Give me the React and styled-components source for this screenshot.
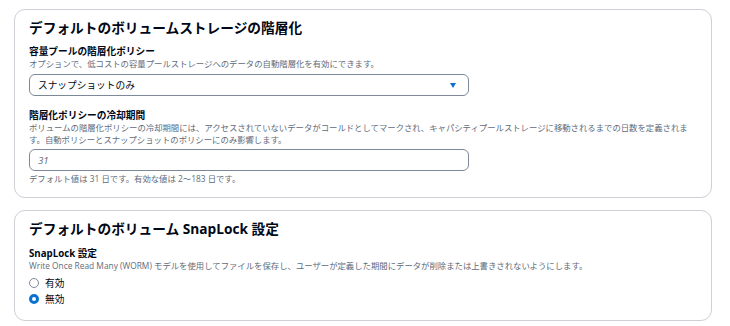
import React from 'react';
import styled, { createGlobalStyle } from 'styled-components';

const GlobalStyle = createGlobalStyle`
  html, body {
    margin: 0;
    padding: 0;
    background: #ffffff;
  }
  body {
    font-family: "Open Sans", "Noto Sans CJK JP", sans-serif;
    color: #000716;
  }
`;

const Page = styled.div`
  display: flex;
  flex-direction: column;
  gap: 12px;
  padding: 9px 18px 4px 14px;
`;

const Panel = styled.section`
  border: 1px solid #cfd0d6;
  border-radius: 11px;
  padding: 9px 14px ${(p) => p.$bottom || 12}px;
  display: flex;
  flex-direction: column;
`;

const Title = styled.h2`
  margin: 0 0 ${(p) => p.$after || 9}px;
  font-size: 13.7px;
  line-height: 18px;
  font-weight: 700;
  color: #000716;
`;

const Field = styled.div`
  display: flex;
  flex-direction: column;
  margin-top: ${(p) => p.$top || 0}px;
`;

const Label = styled.div`
  font-size: 9.7px;
  line-height: 12px;
  font-weight: 700;
  color: #000716;
`;

const Description = styled.div`
  font-size: 8.37px;
  line-height: 12px;
  color: #5f6b7a;
`;

const Constraint = styled(Description)`
  margin-top: 2px;
`;

const Box = styled.div`
  box-sizing: border-box;
  width: 440px;
  height: 22px;
  margin-top: ${(p) => p.$top || 4}px;
  border: 1.5px solid #7d8998;
  border-radius: 6px;
  padding: 0 12px 0 8px;
  display: flex;
  align-items: center;
  justify-content: space-between;
  font-size: 9.7px;
  color: ${(p) => (p.$placeholder ? '#5f6b7a' : '#000716')};
  font-style: ${(p) => (p.$placeholder ? 'italic' : 'normal')};
`;

const Caret = styled.span`
  width: 0;
  height: 0;
  border-left: 3px solid transparent;
  border-right: 3px solid transparent;
  border-top: 5px solid #0972d3;
`;

const RadioGroup = styled.div`
  display: flex;
  flex-direction: column;
  margin-top: 3px;
`;

const RadioRow = styled.label`
  display: flex;
  align-items: center;
  gap: 6px;
  height: 16px;
  font-size: 9.7px;
  color: #000716;
`;

const RadioDot = styled.span`
  box-sizing: border-box;
  width: 10px;
  height: 10px;
  border-radius: 50%;
  border: ${(p) => (p.$checked ? '3px solid #0972d3' : '1.4px solid #7d8998')};
  background: #ffffff;
`;

const radios = [
  { label: '有効', checked: false },
  { label: '無効', checked: true },
];

export default function App() {
  return (
    <>
      <GlobalStyle />
      <Page>
        <Panel $bottom={12}>
          <Title>デフォルトのボリュームストレージの階層化</Title>
          <Field>
            <Label>容量プールの階層化ポリシー</Label>
            <Description>
              オプションで、低コストの容量プールストレージへのデータの自動階層化を有効にできます。
            </Description>
            <Box>
              <span>スナップショットのみ</span>
              <Caret />
            </Box>
          </Field>
          <Field $top={14}>
            <Label>階層化ポリシーの冷却期間</Label>
            <Description>
              ボリュームの階層化ポリシーの冷却期間には、アクセスされていないデータがコールドとしてマークされ、キャパシティプールストレージに移動されるまでの日数を定義されます。自動ポリシーとスナップショットのポリシーにのみ影響します。
            </Description>
            <Box $top={3} $placeholder>
              <span>31</span>
            </Box>
            <Constraint>デフォルト値は 31 日です。有効な値は 2〜183 日です。</Constraint>
          </Field>
        </Panel>
        <Panel $bottom={13}>
          <Title $after={10}>デフォルトのボリューム SnapLock 設定</Title>
          <Field>
            <Label>SnapLock 設定</Label>
            <Description>
              Write Once Read Many (WORM) モデルを使用してファイルを保存し、ユーザーが定義した期間にデータが削除または上書きされないようにします。
            </Description>
            <RadioGroup>
              {radios.map((r) => (
                <RadioRow key={r.label}>
                  <RadioDot $checked={r.checked} />
                  {r.label}
                </RadioRow>
              ))}
            </RadioGroup>
          </Field>
        </Panel>
      </Page>
    </>
  );
}
